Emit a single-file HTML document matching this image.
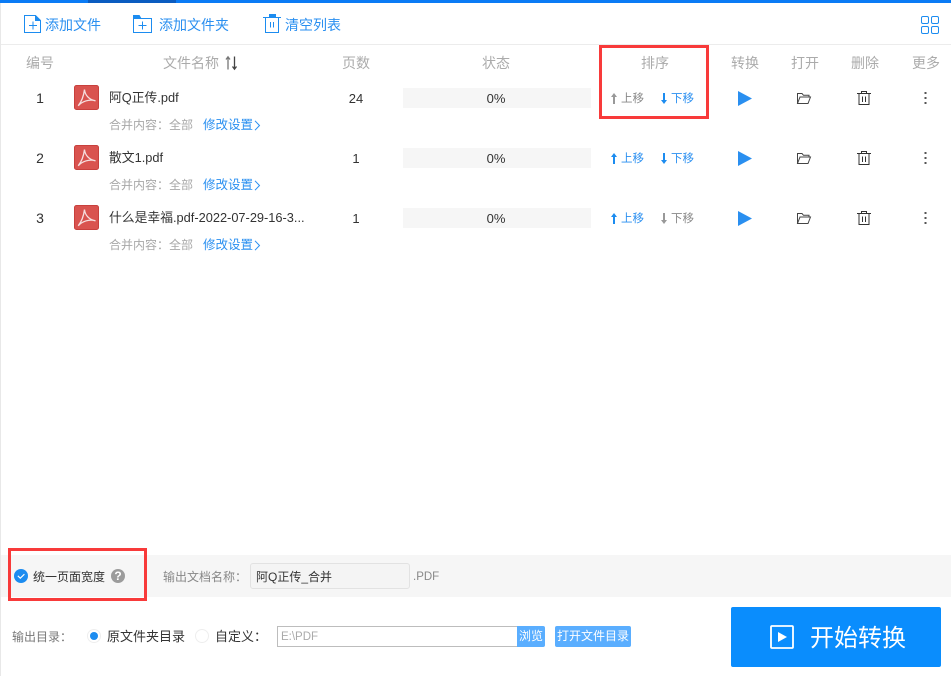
<!DOCTYPE html>
<html><head><meta charset="utf-8">
<style>
html,body{margin:0;padding:0;background:#fff}
#p{position:relative;width:951px;height:676px;overflow:hidden;background:#fff;font-family:"Liberation Sans","Noto Sans CJK SC",sans-serif;font-size:13px;color:#333}
.t{position:absolute;white-space:nowrap;line-height:18px;height:18px}
.c{transform:translateX(-50%)}
.a{position:absolute}
.g{color:#a8a8a8}
.b{color:#2a8ff0}
.hd{color:#ababab;top:54px;font-size:14px}
svg{position:absolute;overflow:visible}
.bar{position:absolute;left:403px;width:188px;height:20px;background:#f6f6f6}
.sm{font-size:11.5px}
.n{font-size:12.8px}
</style></head><body><div id="p">
<svg width="0" height="0" style="position:absolute"><defs>
<symbol id="pdf" viewBox="0 0 25 25" overflow="visible"><rect x=".5" y=".5" width="24" height="24" rx="2" fill="#d9534f" stroke="#c8403d"/><path d="M10.500 4.500C9.800 10 8 16 4.200 20.800M4.200 20.800C8 16.500 15 13.800 21.500 15.800M10.500 4.500C11 10 15 14.800 21.500 15.800" fill="none" stroke="#f6dede" stroke-width="1.300"/></symbol>
<symbol id="chev" viewBox="0 0 7 11"><path d="M1 .8L5.500 5.500 1 10.200" fill="none" stroke="#2a8ff0" stroke-width="1"/></symbol>
<symbol id="up" viewBox="0 0 6 11" overflow="visible"><path d="M3 0L6 4H4V11H2V4H0Z"/></symbol>
<symbol id="dn" viewBox="0 0 6 11" overflow="visible"><path d="M3 11L6 7H4V0H2V7H0Z"/></symbol>
<symbol id="play" viewBox="0 0 14 15"><path d="M0 0L14 7.500 0 15Z" fill="#2a8ff0"/></symbol>
<symbol id="fold" viewBox="0 0 14 11" overflow="visible"><path d="M.5 10.500V.5H5L6.500 2.300H12V4M.5 10.500H11L13.500 4H3Z" fill="none" stroke="#444" stroke-width="1"/></symbol>
<symbol id="trash" viewBox="0 0 14 14" overflow="visible"><path d="M0 2.500H14M4.500 2.500V.5H9.500V2.500M2 2.500V13.500H12V2.500M5.500 5.500V11M8.500 5.500V11" fill="none" stroke="#333" stroke-width="1"/></symbol>
<symbol id="dots" viewBox="0 0 3 12"><path d="M.5 0h2v2h-2zM.5 5h2v2h-2zM.5 10h2v2h-2z" fill="#555"/></symbol>
</defs></svg>

<div class="a" style="left:0;top:0;width:951px;height:3px;background:#0a7bf5"></div>
<div class="a" style="left:88px;top:0;width:88px;height:3px;background:#0b5cc0"></div>
<div class="a" style="left:0;top:3px;width:1px;height:673px;background:#e8e8e8"></div>
<div class="a" style="left:1px;top:44px;width:950px;height:1px;background:#ececec"></div>

<svg style="left:24px;top:15px" width="17" height="18" fill="none" stroke="#1c8cf0" stroke-width="1"><path d="M.5.500H11.500L16.500 5.500V17.500H.5Z"/><path d="M11 0L17 6H11Z" fill="#1c8cf0" stroke="none"/><path d="M5 10.500H13M9 6.500V14.500"/></svg>
<div class="t b" style="left:45px;top:16px;font-size:14px">添加文件</div>
<svg style="left:133px;top:15px" width="19" height="18" fill="none" stroke="#1c8cf0" stroke-width="1"><path d="M.5 3.500H18.500V17.500H.5Z"/><path d="M0 0H6.500L8.500 3.500H0Z" fill="#1c8cf0" stroke="none"/><path d="M5.500 10.500H13.500M9.500 6.500V14.500"/></svg>
<div class="t b" style="left:159px;top:16px;font-size:14px">添加文件夹</div>
<svg style="left:263px;top:14px" width="18" height="19" fill="none" stroke="#1c8cf0" stroke-width="1"><path d="M2.500 3.500V18.500H15.500V3.500"/><path d="M0 3.500H18" /><path d="M6 0H13V3H6Z" fill="#1c8cf0" stroke="none"/><path d="M7.500 8V13.500M10.500 8V13.500"/></svg>
<div class="t b" style="left:285px;top:16px;font-size:14px">清空列表</div>
<svg style="left:921px;top:16px" width="18" height="18" fill="none" stroke="#1c8cf0" stroke-width="1"><rect x=".5" y=".5" width="7" height="7" rx="1.500"/><rect x="10.500" y=".5" width="7" height="7" rx="1.500"/><rect x=".5" y="10.500" width="7" height="7" rx="1.500"/><rect x="10.500" y="10.500" width="7" height="7" rx="1.500"/></svg>

<div class="t hd c" style="left:40px">编号</div>
<div class="t hd c" style="left:191px">文件名称</div>
<svg style="left:225px;top:56px" width="13" height="14" fill="none" stroke-width="1.300"><path d="M3 13.500V1M1 3.500L3 .8 5 3.500" stroke="#777"/><path d="M9.500.5V13M7.500 10.500L9.500 13.200 11.500 10.500" stroke="#444"/></svg>
<div class="t hd c" style="left:356px">页数</div>
<div class="t hd c" style="left:496px">状态</div>
<div class="t hd c" style="left:655px">排序</div>
<div class="t hd c" style="left:745px">转换</div>
<div class="t hd c" style="left:805px">打开</div>
<div class="t hd c" style="left:865px">删除</div>
<div class="t hd c" style="left:926px">更多</div>

<!-- row 1 -->
<div class="t c" style="left:40px;top:89px;font-size:14px">1</div>
<svg style="left:74px;top:85px" width="25" height="25"><use href="#pdf"/></svg>
<div class="t n" style="left:109px;top:89px">阿Q正传.pdf</div>
<div class="t g" style="left:109px;top:116px;font-size:12px">合并内容：全部</div>
<div class="t b" style="left:203px;top:116px;font-size:12.500px">修改设置</div>
<svg style="left:254px;top:120px" width="7" height="11"><use href="#chev"/></svg>
<div class="t c" style="left:356px;top:90px">24</div>
<div class="bar" style="top:88px"></div>
<div class="t c" style="left:496px;top:90px;font-size:13px">0%</div>
<svg style="left:611px;top:93px" width="6" height="11" fill="#999"><use href="#up"/></svg>
<div class="t sm" style="left:621px;top:90px;color:#888">上移</div>
<svg style="left:661px;top:93px" width="6" height="11" fill="#1c8cf0"><use href="#dn"/></svg>
<div class="t sm b" style="left:671px;top:90px">下移</div>
<svg style="left:738px;top:91px" width="14" height="15"><use href="#play"/></svg>
<svg style="left:797px;top:93px" width="14" height="11"><use href="#fold"/></svg>
<svg style="left:857px;top:91px" width="14" height="14"><use href="#trash"/></svg>
<svg style="left:924px;top:92px" width="3" height="12"><use href="#dots"/></svg>

<!-- row 2 -->
<div class="t c" style="left:40px;top:149px;font-size:14px">2</div>
<svg style="left:74px;top:145px" width="25" height="25"><use href="#pdf"/></svg>
<div class="t n" style="left:109px;top:149px">散文1.pdf</div>
<div class="t g" style="left:109px;top:176px;font-size:12px">合并内容：全部</div>
<div class="t b" style="left:203px;top:176px;font-size:12.500px">修改设置</div>
<svg style="left:254px;top:180px" width="7" height="11"><use href="#chev"/></svg>
<div class="t c" style="left:356px;top:150px">1</div>
<div class="bar" style="top:148px"></div>
<div class="t c" style="left:496px;top:150px;font-size:13px">0%</div>
<svg style="left:611px;top:153px" width="6" height="11" fill="#1c8cf0"><use href="#up"/></svg>
<div class="t sm b" style="left:621px;top:150px">上移</div>
<svg style="left:661px;top:153px" width="6" height="11" fill="#1c8cf0"><use href="#dn"/></svg>
<div class="t sm b" style="left:671px;top:150px">下移</div>
<svg style="left:738px;top:151px" width="14" height="15"><use href="#play"/></svg>
<svg style="left:797px;top:153px" width="14" height="11"><use href="#fold"/></svg>
<svg style="left:857px;top:151px" width="14" height="14"><use href="#trash"/></svg>
<svg style="left:924px;top:152px" width="3" height="12"><use href="#dots"/></svg>

<!-- row 3 -->
<div class="t c" style="left:40px;top:209px;font-size:14px">3</div>
<svg style="left:74px;top:205px" width="25" height="25"><use href="#pdf"/></svg>
<div class="t n" style="left:109px;top:209px">什么是幸福.pdf-2022-07-29-16-3...</div>
<div class="t g" style="left:109px;top:236px;font-size:12px">合并内容：全部</div>
<div class="t b" style="left:203px;top:236px;font-size:12.500px">修改设置</div>
<svg style="left:254px;top:240px" width="7" height="11"><use href="#chev"/></svg>
<div class="t c" style="left:356px;top:210px">1</div>
<div class="bar" style="top:208px"></div>
<div class="t c" style="left:496px;top:210px;font-size:13px">0%</div>
<svg style="left:611px;top:213px" width="6" height="11" fill="#1c8cf0"><use href="#up"/></svg>
<div class="t sm b" style="left:621px;top:210px">上移</div>
<svg style="left:661px;top:213px" width="6" height="11" fill="#999"><use href="#dn"/></svg>
<div class="t sm" style="left:671px;top:210px;color:#888">下移</div>
<svg style="left:738px;top:211px" width="14" height="15"><use href="#play"/></svg>
<svg style="left:797px;top:213px" width="14" height="11"><use href="#fold"/></svg>
<svg style="left:857px;top:211px" width="14" height="14"><use href="#trash"/></svg>
<svg style="left:924px;top:212px" width="3" height="12"><use href="#dots"/></svg>

<!-- red box -->
<div class="a" style="left:599px;top:45px;width:110px;height:74px;box-sizing:border-box;border:3px solid #f83a3a"></div>

<!-- bottom band -->
<div class="a" style="left:1px;top:555px;width:950px;height:42px;background:#f6f6f6"></div>
<div class="a" style="left:14px;top:569px;width:14px;height:14px;border-radius:50%;background:#1c8cf0"></div>
<svg style="left:14px;top:569px" width="14" height="14" fill="none" stroke="#fff" stroke-width="1.100"><path d="M3.800 6.800L6.300 9.200 10.400 5.200"/></svg>
<div class="t" style="left:33px;top:568px;font-size:12px">统一页面宽度</div>
<div class="a" style="left:111px;top:569px;width:14px;height:14px;border-radius:50%;background:#9c9c9c;color:#fff;font-size:12px;font-weight:bold;line-height:14px;text-align:center">?</div>
<div class="a" style="left:8px;top:548px;width:139px;height:53px;box-sizing:border-box;border:3px solid #f83a3a"></div>
<div class="t" style="left:163px;top:568px;font-size:12px;color:#888">输出文档名称：</div>
<div class="a" style="left:250px;top:563px;width:160px;height:26px;box-sizing:border-box;border:1px solid #e2e2e2;border-radius:3px;background:#f4f4f4"></div>
<div class="t" style="left:256px;top:568px;font-size:12px">阿Q正传_合并</div>
<div class="t" style="left:413px;top:568px;font-size:11.500px;color:#888">.PDF</div>

<!-- output row -->
<div class="t" style="left:12px;top:628px;font-size:12px;color:#777">输出目录：</div>
<div class="a" style="left:87px;top:629px;width:14px;height:14px;box-sizing:border-box;border:1px solid #eee;border-radius:50%;background:#fff"></div>
<div class="a" style="left:90px;top:632px;width:8px;height:8px;border-radius:50%;background:#1c8cf0"></div>
<div class="t" style="left:107px;top:628px;font-size:13px">原文件夹目录</div>
<div class="a" style="left:195px;top:629px;width:14px;height:14px;box-sizing:border-box;border:1px solid #eee;border-radius:50%;background:#fff"></div>
<div class="t" style="left:215px;top:628px;font-size:13px">自定义：</div>
<div class="a" style="left:277px;top:626px;width:241px;height:21px;box-sizing:border-box;border:1px solid #bdbdbd;border-right:0"></div>
<div class="t" style="left:281px;top:628px;font-size:11.500px;color:#aaa">E:\PDF</div>
<div class="a" style="left:517px;top:626px;width:28px;height:21px;background:#5aaeff;border-radius:0 2px 2px 0;color:#fff;font-size:12px;line-height:21px;text-align:center">浏览</div>
<div class="a" style="left:555px;top:626px;width:76px;height:21px;background:#5aaeff;border-radius:2px;color:#fff;font-size:12px;line-height:21px;text-align:center">打开文件目录</div>
<div class="a" style="left:731px;top:607px;width:210px;height:60px;background:#0a8dfd;border-radius:2px"></div>
<svg style="left:770px;top:625px" width="24" height="24" fill="none" stroke="#fff" stroke-width="1.800"><rect x="1" y="1" width="22" height="22" rx="1"/><path d="M8 7L17 12 8 17Z" fill="#fff" stroke="none"/></svg>
<div class="t" style="left:810px;top:624px;font-size:24px;line-height:30px;height:30px;color:#fff">开始转换</div>
</div></body></html>
